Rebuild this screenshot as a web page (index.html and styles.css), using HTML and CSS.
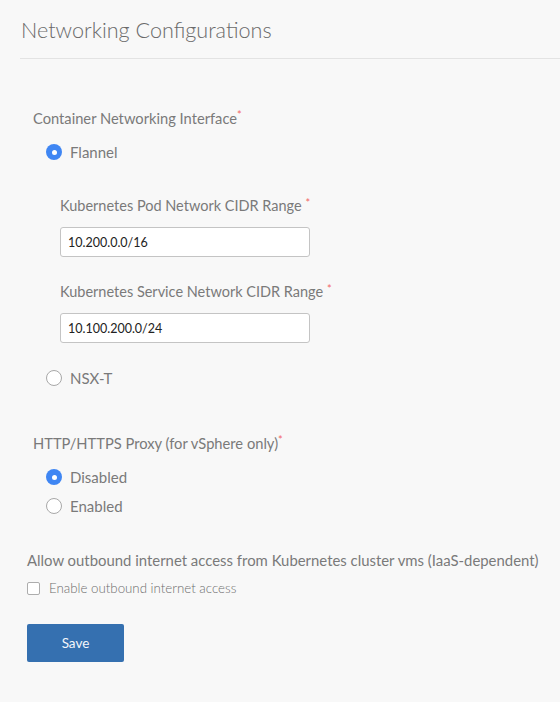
FILE: index.html
```html
<!DOCTYPE html>
<html>
<head>
<meta charset="utf-8">
<link rel="stylesheet" href="styles.css">
</head>
<body>
<div class="page">
  <header class="header">
    <h1 class="title">Networking Configurations</h1>
  </header>
  <form class="form">
    <div class="group cni">
      <div class="label">Container Networking Interface<span class="req">*</span></div>
      <label class="radio first"><span class="dot checked"></span><span>Flannel</span></label>
      <div class="nested">
        <div class="label sub">Kubernetes Pod Network CIDR Range <span class="req">*</span></div>
        <input class="input" type="text" value="10.200.0.0/16">
        <div class="label sub second">Kubernetes Service Network CIDR Range <span class="req">*</span></div>
        <input class="input" type="text" value="10.100.200.0/24">
      </div>
      <label class="radio nsx"><span class="dot"></span><span>NSX-T</span></label>
    </div>
    <div class="group proxy">
      <div class="label">HTTP/HTTPS Proxy (for vSphere only)<span class="req">*</span></div>
      <label class="radio first"><span class="dot checked"></span><span>Disabled</span></label>
      <label class="radio tight"><span class="dot"></span><span>Enabled</span></label>
    </div>
    <div class="group outbound">
      <div class="label wide">Allow outbound internet access from Kubernetes cluster vms (IaaS-dependent)</div>
      <label class="check"><span class="box"></span><span>Enable outbound internet access</span></label>
    </div>
    <button class="save" type="button">Save</button>
  </form>
</div>
</body>
</html>
```

FILE: styles.css
```css
html, body {
  margin: 0;
  padding: 0;
  background: #f8f8f8;
}
body {
  font-family: "Source Sans Pro", Lato, "Noto Sans", sans-serif;
  color: #777;
}
.page {
  padding-left: 20px;
  height: 702px;
}
.header {
  padding-top: 15px;
  padding-bottom: 13px;
  border-bottom: 1px solid #e3e3e3;
}
.title {
  margin: 0 0 0 1px;
  font-size: 21.6px;
  line-height: 30px;
  font-weight: 300;
  color: #6a6a6a;
}
.form {
  display: flex;
  flex-direction: column;
  align-items: flex-start;
}
.group {
  display: flex;
  flex-direction: column;
  align-items: flex-start;
  padding-left: 13px;
}
.cni { margin-top: 49px; }
.label {
  font-size: 14.7px;
  line-height: 20px;
  font-weight: 400;
  color: #7a7a7a;
}
.label.sub { font-size: 14.5px; }
.req {
  color: #f26565;
  font-size: 11px;
  vertical-align: top;
  line-height: 14px;
}
.radio {
  display: flex;
  align-items: center;
  gap: 8px;
  height: 24px;
  padding-left: 13px;
  font-size: 15px;
  color: #7a7a7a;
}
.radio.first { margin-top: 12px; }
.radio.tight { margin-top: 5px; }
.radio.nsx { margin-top: 23px; }
.dot {
  width: 14px;
  height: 14px;
  border-radius: 50%;
  border: 1px solid #a8a8a8;
  background: #fff;
  box-sizing: content-box;
  position: relative;
  flex: none;
}
.dot.checked {
  width: 16px;
  height: 16px;
  border: none;
  background: #3f86f3;
}
.dot.checked::after {
  content: "";
  position: absolute;
  left: 5.5px;
  top: 5.5px;
  width: 5px;
  height: 5px;
  border-radius: 50%;
  background: #fff;
}
.nested {
  display: flex;
  flex-direction: column;
  align-items: flex-start;
  padding-left: 27px;
  margin-top: 32px;
}
.label.sub.second { margin-top: 25px; }
.input {
  margin-top: 11px;
  width: 250px;
  height: 30px;
  box-sizing: border-box;
  border: 1px solid #c4c4c4;
  border-radius: 3px;
  background: #fff;
  padding: 0 7px;
  font-family: "Source Sans Pro", Lato, "Noto Sans", sans-serif;
  font-size: 12.5px;
  color: #222;
}
.proxy { margin-top: 43px; }
.outbound {
  margin-top: 32px;
  padding-left: 7px;
}
.label.wide {
  font-size: 14.9px;
}
.check {
  display: flex;
  align-items: center;
  gap: 9px;
  margin-top: 8px;
  height: 20px;
  font-size: 13.3px;
  font-weight: 300;
  color: #6e6e6e;
}
.box {
  width: 11px;
  height: 11px;
  border: 1px solid #adadad;
  border-radius: 2px;
  background: #fff;
  flex: none;
}
.save {
  margin-top: 26px;
  margin-left: 7px;
  width: 97px;
  height: 38px;
  border: none;
  border-radius: 2px;
  background: #3570b0;
  color: #f2f6fb;
  font-family: "Source Sans Pro", Lato, "Noto Sans", sans-serif;
  font-size: 13.5px;
  cursor: pointer;
}
```
